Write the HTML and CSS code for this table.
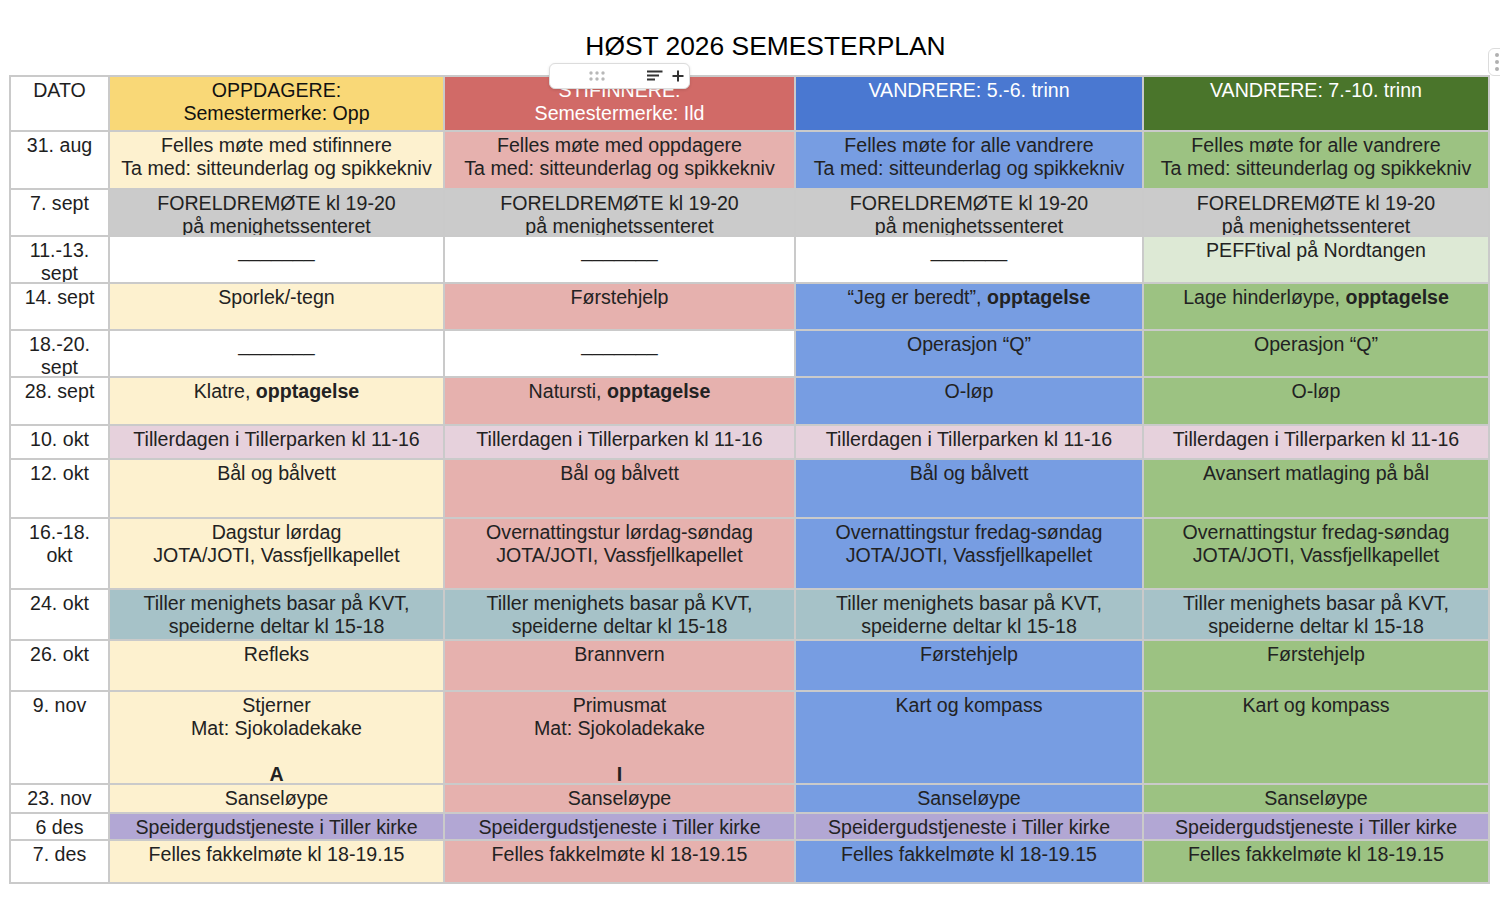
FILE: index.html
```html
<!DOCTYPE html>
<html lang="no">
<head>
<meta charset="utf-8">
<title>HØST 2026 SEMESTERPLAN</title>
<link rel="stylesheet" href="styles.css">
</head>
<body>
<div class="page">
  <h1 class="title">HØST 2026 SEMESTERPLAN</h1>

  <div class="plan">
    <div class="cell date">DATO</div>
    <div class="cell hy">OPPDAGERE:<br>Semestermerke: Opp</div>
    <div class="cell hr light">STIFINNERE:<br>Semestermerke: Ild</div>
    <div class="cell hb light">VANDRERE: 5.-6. trinn</div>
    <div class="cell hg light">VANDRERE: 7.-10. trinn</div>

    <div class="cell date">31. aug</div>
    <div class="cell y">Felles møte med stifinnere<br>Ta med: sitteunderlag og spikkekniv</div>
    <div class="cell r">Felles møte med oppdagere<br>Ta med: sitteunderlag og spikkekniv</div>
    <div class="cell b">Felles møte for alle vandrere<br>Ta med: sitteunderlag og spikkekniv</div>
    <div class="cell g">Felles møte for alle vandrere<br>Ta med: sitteunderlag og spikkekniv</div>

    <div class="cell date">7. sept</div>
    <div class="cell gray">FORELDREMØTE kl 19-20<br>på menighetssenteret</div>
    <div class="cell gray">FORELDREMØTE kl 19-20<br>på menighetssenteret</div>
    <div class="cell gray">FORELDREMØTE kl 19-20<br>på menighetssenteret</div>
    <div class="cell gray">FORELDREMØTE kl 19-20<br>på menighetssenteret</div>

    <div class="cell date">11.-13.<br>sept</div>
    <div class="cell w">_______</div>
    <div class="cell w">_______</div>
    <div class="cell w">_______</div>
    <div class="cell pg">PEFFtival på Nordtangen</div>

    <div class="cell date">14. sept</div>
    <div class="cell y">Sporlek/-tegn</div>
    <div class="cell r">Førstehjelp</div>
    <div class="cell b">“Jeg er beredt”, <b>opptagelse</b></div>
    <div class="cell g">Lage hinderløype, <b>opptagelse</b></div>

    <div class="cell date">18.-20.<br>sept</div>
    <div class="cell w">_______</div>
    <div class="cell w">_______</div>
    <div class="cell b">Operasjon “Q”</div>
    <div class="cell g">Operasjon “Q”</div>

    <div class="cell date">28. sept</div>
    <div class="cell y">Klatre, <b>opptagelse</b></div>
    <div class="cell r">Natursti, <b>opptagelse</b></div>
    <div class="cell b">O-løp</div>
    <div class="cell g">O-løp</div>

    <div class="cell date">10. okt</div>
    <div class="cell mg">Tillerdagen i Tillerparken kl 11-16</div>
    <div class="cell mg">Tillerdagen i Tillerparken kl 11-16</div>
    <div class="cell mg">Tillerdagen i Tillerparken kl 11-16</div>
    <div class="cell mg">Tillerdagen i Tillerparken kl 11-16</div>

    <div class="cell date">12. okt</div>
    <div class="cell y">Bål og bålvett</div>
    <div class="cell r">Bål og bålvett</div>
    <div class="cell b">Bål og bålvett</div>
    <div class="cell g">Avansert matlaging på bål</div>

    <div class="cell date">16.-18.<br>okt</div>
    <div class="cell y">Dagstur lørdag<br>JOTA/JOTI, Vassfjellkapellet</div>
    <div class="cell r">Overnattingstur lørdag-søndag<br>JOTA/JOTI, Vassfjellkapellet</div>
    <div class="cell b">Overnattingstur fredag-søndag<br>JOTA/JOTI, Vassfjellkapellet</div>
    <div class="cell g">Overnattingstur fredag-søndag<br>JOTA/JOTI, Vassfjellkapellet</div>

    <div class="cell date">24. okt</div>
    <div class="cell cy">Tiller menighets basar på KVT,<br>speiderne deltar kl 15-18</div>
    <div class="cell cy">Tiller menighets basar på KVT,<br>speiderne deltar kl 15-18</div>
    <div class="cell cy">Tiller menighets basar på KVT,<br>speiderne deltar kl 15-18</div>
    <div class="cell cy">Tiller menighets basar på KVT,<br>speiderne deltar kl 15-18</div>

    <div class="cell date">26. okt</div>
    <div class="cell y">Refleks</div>
    <div class="cell r">Brannvern</div>
    <div class="cell b">Førstehjelp</div>
    <div class="cell g">Førstehjelp</div>

    <div class="cell date">9. nov</div>
    <div class="cell y">Stjerner<br>Mat: Sjokoladekake<br><br><b>A</b></div>
    <div class="cell r">Primusmat<br>Mat: Sjokoladekake<br><br><b>I</b></div>
    <div class="cell b">Kart og kompass</div>
    <div class="cell g">Kart og kompass</div>

    <div class="cell date">23. nov</div>
    <div class="cell y">Sanseløype</div>
    <div class="cell r">Sanseløype</div>
    <div class="cell b">Sanseløype</div>
    <div class="cell g">Sanseløype</div>

    <div class="cell date">6 des</div>
    <div class="cell pu">Speidergudstjeneste i Tiller kirke</div>
    <div class="cell pu">Speidergudstjeneste i Tiller kirke</div>
    <div class="cell pu">Speidergudstjeneste i Tiller kirke</div>
    <div class="cell pu">Speidergudstjeneste i Tiller kirke</div>

    <div class="cell date">7. des</div>
    <div class="cell y">Felles fakkelmøte kl 18-19.15</div>
    <div class="cell r">Felles fakkelmøte kl 18-19.15</div>
    <div class="cell b">Felles fakkelmøte kl 18-19.15</div>
    <div class="cell g">Felles fakkelmøte kl 18-19.15</div>
  </div>

  <div class="col-toolbar">
    <svg class="grip" width="18" height="11" viewBox="0 0 18 11" aria-hidden="true">
      <circle cx="2" cy="2" r="1.7"/><circle cx="8" cy="2" r="1.7"/><circle cx="14" cy="2" r="1.7"/>
      <circle cx="2" cy="8" r="1.7"/><circle cx="8" cy="8" r="1.7"/><circle cx="14" cy="8" r="1.7"/>
    </svg>
    <svg class="sort" width="16" height="11" viewBox="0 0 16 11" aria-hidden="true">
      <path d="M0 1.5H15.5M0 5.5H12M0 9.5H8"/>
    </svg>
    <svg class="plus" width="12" height="12" viewBox="0 0 12 12" aria-hidden="true">
      <path d="M6 0.5V11.5M0.5 6H11.5"/>
    </svg>
  </div>

  <div class="side-menu">
    <svg width="8" height="20" viewBox="0 0 8 20" aria-hidden="true">
      <circle cx="6" cy="3" r="2"/><circle cx="6" cy="10" r="2"/><circle cx="6" cy="17" r="2"/>
    </svg>
  </div>
</div>
</body>
</html>
```

FILE: styles.css
```css
* { box-sizing: border-box; }

html, body {
  margin: 0;
  padding: 0;
  background: #ffffff;
}

body {
  font-family: "Liberation Sans", Arial, sans-serif;
  color: #222222;
}

.page {
  position: relative;
  width: 1500px;
  height: 897px;
  overflow: hidden;
  padding-top: 31px;
}

.title {
  margin: 0 0 14px 31px;
  font-size: 26.4px;
  line-height: 30px;
  font-weight: 400;
  color: #000;
  text-align: center;
}

.plan {
  margin-left: 9px;
  width: 1481px;
  display: grid;
  grid-template-columns: 97px 333px 349px 346px 344px;
  grid-template-rows: 53px 56px 45px 45px 45px 45px 46px 32px 57px 69px 49px 49px 91px 27px 25px 41px;
  gap: 2px;
  padding: 2px;
  background: #cacaca;
}

.cell {
  padding: 2px 3px 0;
  font-size: 19.6px;
  line-height: 23px;
  text-align: center;
  background: #ffffff;
  overflow: hidden;
  white-space: nowrap;
}

.cell b { font-weight: 700; }

.date { background: #ffffff; color: #1e1e1e; }

.hy { background: #f9d877; color: #111; }
.hr { background: #d16a67; }
.hb { background: #4a78d1; }
.hg { background: #4a752b; }
.light { color: #ffffff; }

.y { background: #fdf1cf; }
.r { background: #e6b1ae; }
.b { background: #779de2; }
.g { background: #9cc282; }
.w { background: #ffffff; }
.gray { background: #cbcbcb; }
.pg { background: #dde9d5; }
.mg { background: #e6d1dc; }
.cy { background: #a6c2c8; }
.pu { background: #b2a7d4; }

.col-toolbar {
  position: absolute;
  left: 549px;
  top: 63px;
  width: 141px;
  height: 26px;
  background: #ffffff;
  border: 1px solid #dcdcdc;
  border-radius: 6px;
  box-shadow: 0 1px 3px rgba(0, 0, 0, 0.12);
}

.col-toolbar svg { position: absolute; }

.grip { left: 39px; top: 7px; fill: #b8b8b8; }

.sort { left: 97px; top: 6px; fill: none; stroke: #333; stroke-width: 2; }

.plus { left: 122px; top: 6px; fill: none; stroke: #333; stroke-width: 2; }

.side-menu {
  position: absolute;
  left: 1488px;
  top: 48px;
  width: 30px;
  height: 28px;
  background: #ffffff;
  border: 1px solid #dcdcdc;
  border-radius: 6px;
}

.side-menu svg {
  position: absolute;
  left: 2px;
  top: 3px;
  fill: #b0b0b0;
}
```
